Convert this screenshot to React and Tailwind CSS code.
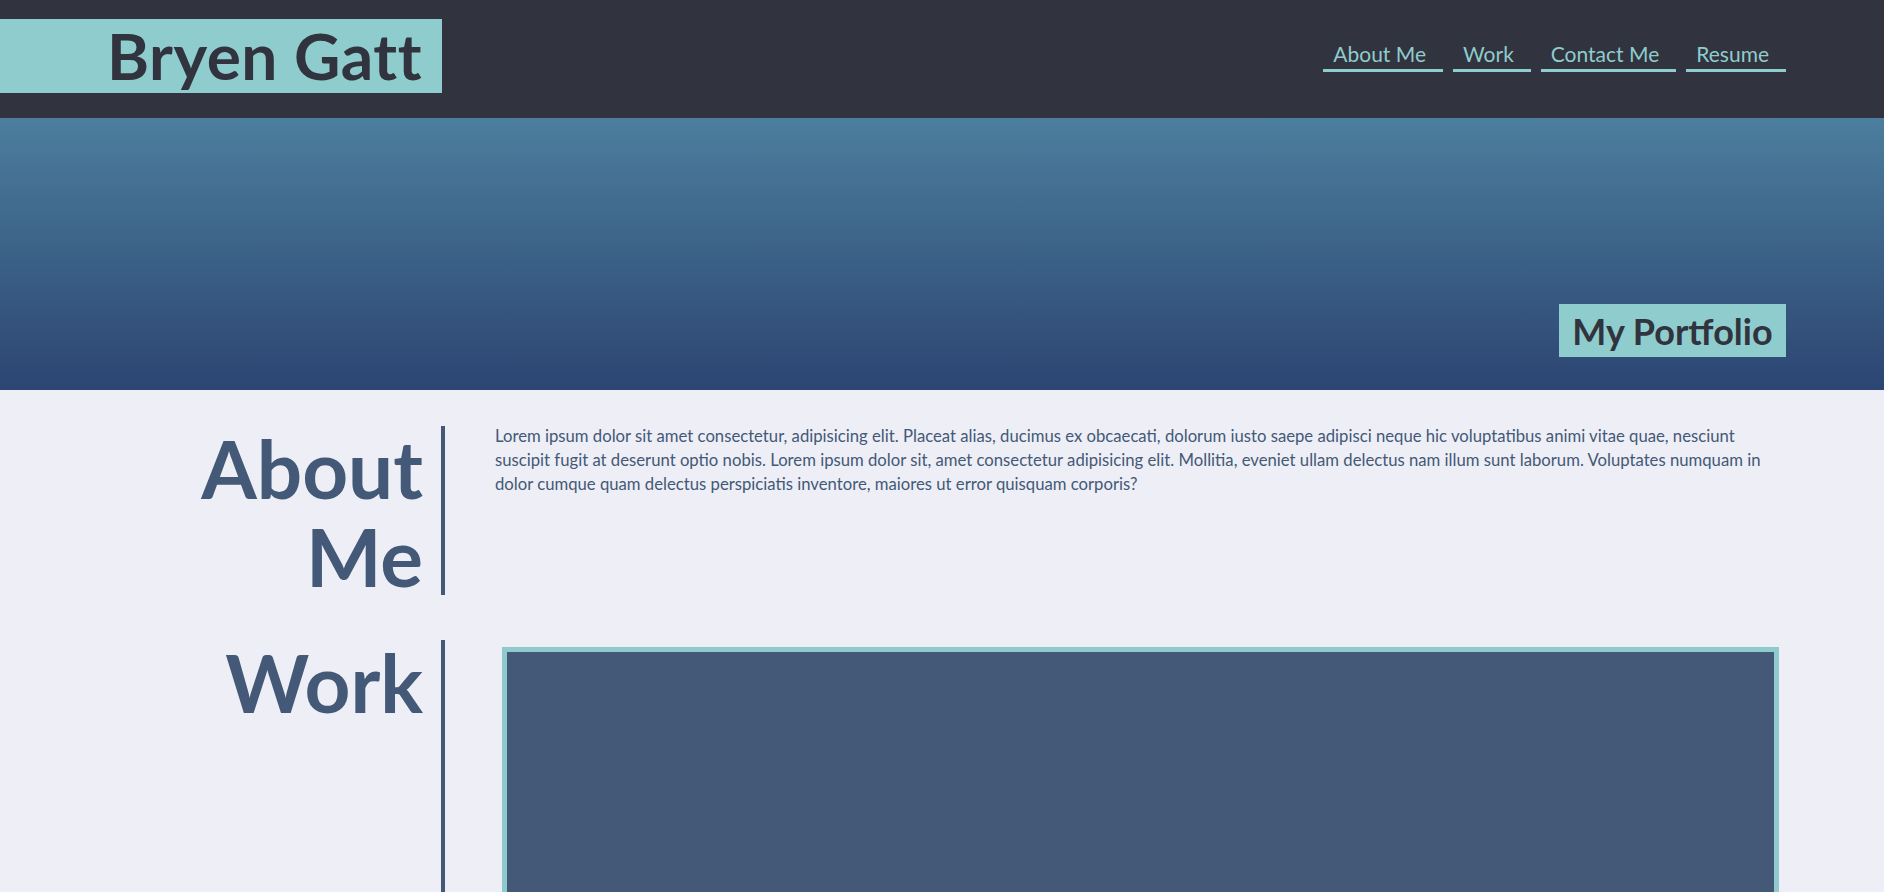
import React from "react";

const NAV = ["About Me", "Work", "Contact Me", "Resume"];

const LOREM =
  "Lorem ipsum dolor sit amet consectetur, adipisicing elit. Placeat alias, ducimus ex obcaecati, dolorum iusto saepe adipisci neque hic voluptatibus animi vitae quae, nesciunt suscipit fugit at deserunt optio nobis. Lorem ipsum dolor sit, amet consectetur adipisicing elit. Mollitia, eveniet ullam delectus nam illum sunt laborum. Voluptates numquam in dolor cumque quam delectus perspiciatis inventore, maiores ut error quisquam corporis?";

export default function App() {
  return (
    <div className="min-h-screen bg-[#eeeef6] font-['Lato','Liberation_Sans',sans-serif]">
      {/* header */}
      <header className="h-[118px] bg-[#31333e] flex justify-between items-start">
        <div className="mt-[19px] h-[74px] w-[442px] bg-[#8fcccd] flex items-center justify-end pr-[20px]">
          <h1 className="text-[64px] leading-none font-bold text-[#31333e] tracking-[0.5px]">Bryen Gatt</h1>
        </div>
        <nav className="mt-[42px] mr-[98px] flex gap-[10px]">
          {NAV.map((item) => (
            <a
              key={item}
              href="#"
              className="pl-[10px] pr-[17px] pb-[3px] border-b-[3px] border-[#8fcccd] text-[#8fcccd] text-[21px] leading-[24px]"
            >
              {item}
            </a>
          ))}
        </nav>
      </header>

      {/* hero */}
      <section className="h-[272px] bg-gradient-to-b from-[#4c7e9d] to-[#2c4572] flex items-end justify-end pr-[98px] pb-[33px]">
        <div className="h-[53px] w-[227px] bg-[#8fcccd] flex items-center justify-center">
          <h2 className="text-[36px] leading-none font-bold text-[#31333e]">My Portfolio</h2>
        </div>
      </section>

      {/* about */}
      <section className="flex pt-[36px]">
        <div className="w-[445px] h-[169px] border-r-4 border-[#435977] pr-[18px] flex justify-end">
          <h2 className="w-[300px] text-right text-[80px] leading-[88px] font-bold text-[#435977] -mt-[2px]">About Me</h2>
        </div>
        <p className="ml-[50px] w-[1284px] text-[16.7px] leading-[24px] text-[#435977] -mt-[2px]">{LOREM}</p>
      </section>

      {/* work */}
      <section className="flex pt-[45px]">
        <div className="w-[445px] h-[400px] border-r-4 border-[#435977] pr-[18px] flex justify-end">
          <h2 className="w-[300px] text-right text-[80px] leading-[88px] font-bold text-[#435977] -mt-[2px]">Work</h2>
        </div>
        <div className="ml-[57px] mt-[7px] w-[1277px] h-[400px] border-[5px] border-[#8fcbcc] bg-[#435977]" />
      </section>
    </div>
  );
}
